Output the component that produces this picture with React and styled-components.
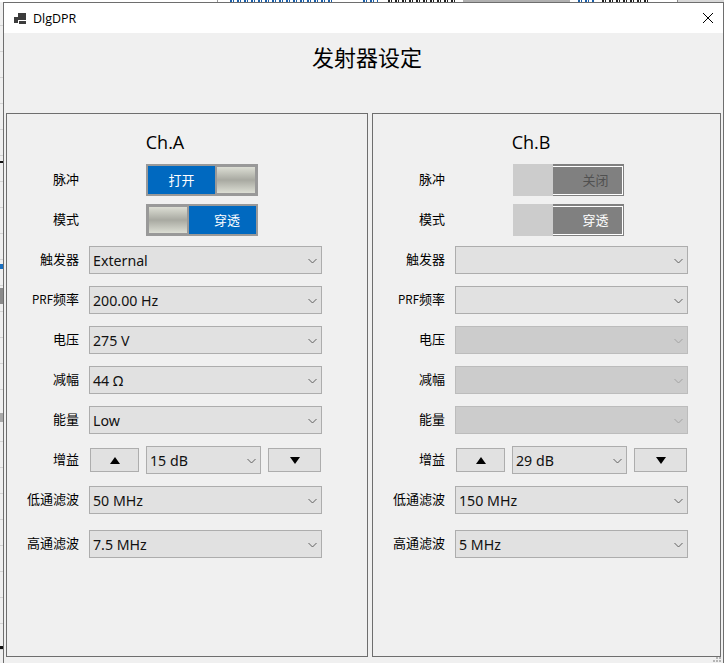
import React from "react";
import styled, { createGlobalStyle } from "styled-components";

const strip = (color, x, y, w, h) => `linear-gradient(${color},${color}) ${x}px ${y}px / ${w}px ${h}px no-repeat`;
const dashes = (color, x, w) =>
  `repeating-linear-gradient(90deg, ${color} 0 2px, transparent 2px 3px, ${color} 3px 4px, transparent 4px 7px) ${x}px 0 / ${w}px 2px no-repeat`;

const Global = createGlobalStyle`
  html, body { margin: 0; padding: 0; height: 663px; overflow: hidden; }
  body {
    font-family: "Noto Sans", "Noto Sans CJK SC", sans-serif;
    color: #000;
    background:
      ${strip("#111", 0, 161, 3, 2)},
      ${strip("#111", 0, 646, 3, 3)},
      ${strip("#1a6fc0", 0, 264, 3, 5)},
      ${strip("#a8a8a8", 0, 413, 3, 9)},
      ${strip("#8a8a8a", 0, 288, 3, 16)},
      ${dashes("#1a5ea8", 230, 105)},
      ${dashes("#1a5ea8", 363, 15)},
      ${dashes("#222", 388, 67)},
      ${dashes("#1a5ea8", 578, 17)},
      ${dashes("#222", 602, 48)},
      ${strip("#b0b0b0", 463, 0, 107, 2)},
      ${strip("#999", 217, 0, 1, 2)},
      ${strip("#888", 677, 0, 1, 2)},
      ${strip("#d8d8d8", 678, 0, 46, 2)},
      ${strip("#fff", 0, 0, 724, 2)},
      repeating-linear-gradient(to bottom, #f0f0f0 0 25px, #d4d4d4 25px 26px);
  }
  #root { padding: 2px 0 0 3px; }
`;

const Window = styled.div`
  position: relative;
  box-sizing: border-box;
  width: 721px;
  height: 661px;
  background: #f0f0f0;
  border: 1px solid #6e6e6e;
  border-bottom: 0;
`;

const TitleBar = styled.div`
  display: flex;
  align-items: center;
  height: 30px;
  padding: 0 10px 0 10px;
  background: #fff;
  font-size: 12.5px;
`;

const TitleText = styled.span`
  flex: 1;
  margin-left: 7px;
  font-family: "Open Sans", sans-serif;
`;

const Heading = styled.h1`
  margin: 0;
  height: 80px;
  box-sizing: border-box;
  padding: 8px 0 0 7px;
  text-align: center;
  font-size: 22px;
  font-weight: 400;
  line-height: 30px;
  font-family: "Noto Sans CJK SC", sans-serif;
`;

const Panels = styled.div`
  display: flex;
  gap: 4px;
  padding-left: 2px;
`;

const Panel = styled.section`
  box-sizing: border-box;
  width: ${(p) => p.$width}px;
  height: 544px;
  border: 1px solid #6e6e6e;
`;

const Column = styled.div`
  display: flex;
  flex-direction: column;
  width: 316px;
`;

const ChannelTitle = styled.h2`
  margin: 0 0 10px;
  padding: 16px 0 0 0;
  height: 24px;
  line-height: 24px;
  box-sizing: content-box;
  text-align: center;
  font-size: 18px;
  font-weight: 400;
  font-family: "Open Sans", sans-serif;
`;

const Row = styled.div`
  display: grid;
  grid-template-columns: 72px 1fr;
  column-gap: 10px;
  align-items: center;
  margin-bottom: ${(p) => p.$after}px;
`;

const Label = styled.span`
  text-align: right;
  font-size: 13px;
  line-height: 18px;
  padding-bottom: 3px;
  font-family: "Noto Sans CJK SC", sans-serif;
`;

const LabelLatin = styled.span`
  font-size: 11.5px;
`;

const ToggleSlot = styled.div`
  display: flex;
  margin-left: ${(p) => (p.$disabled ? 58 : 57)}px;
`;

const ToggleFrame = styled.div`
  display: flex;
  gap: 2px;
  box-sizing: border-box;
  width: 112px;
  height: 32px;
  border: 2px solid #999;
  background: #999;
`;

const ToggleFace = styled.div`
  flex: 1;
  display: flex;
  align-items: center;
  justify-content: center;
  padding-left: ${(p) => p.$shift || 0}px;
  padding-bottom: 2px;
  box-sizing: border-box;
  background: #0069c0;
  color: #fff;
  font-size: 13px;
  font-family: "Noto Sans CJK SC", sans-serif;
`;

const ToggleThumb = styled.div`
  width: 38px;
  margin: 1px 0;
  margin-${(p) => p.$side}: 1px;
  background: linear-gradient(to bottom, #dcded4 0%, #a8a9a1 50%, #dcded4 100%);
`;

const OffPart = styled.div`
  width: 40px;
  height: 32px;
  background: #ccc;
`;

const OnPart = styled.div`
  position: relative;
  display: flex;
  align-items: center;
  justify-content: center;
  box-sizing: border-box;
  width: 71px;
  height: 32px;
  padding: 0 0 2px 14px;
  background: #808080;
  color: ${(p) => p.$color};
  font-size: 13px;
  font-family: "Noto Sans CJK SC", sans-serif;
  &::after {
    content: "";
    position: absolute;
    inset: 2px 1px 1px 0;
    border: 1px solid #fff;
    border-left: 0;
  }
`;

const Select = styled.div`
  position: relative;
  display: flex;
  align-items: center;
  box-sizing: border-box;
  width: ${(p) => p.$width || 233}px;
  height: 28px;
  padding-left: 3px;
  border: 1px solid ${(p) => (p.$disabled ? "#bcbcbc" : "#adadad")};
  background: ${(p) => (p.$disabled ? "#cccccc" : "#e1e1e1")};
  font-size: 14.2px;
  color: #111;
`;

const Chevron = styled.svg`
  position: absolute;
  right: 4px;
  top: 11px;
  width: 9px;
  height: 6px;
  fill: none;
  stroke: ${(p) => (p.$disabled ? "#a2a2a2" : "#606060")};
  stroke-width: 1;
`;

const GainControls = styled.div`
  display: flex;
  align-items: center;
  gap: 7px;
  margin-left: 1px;
`;

const StepButton = styled.div`
  display: flex;
  align-items: center;
  justify-content: center;
  box-sizing: border-box;
  width: ${(p) => p.$width}px;
  height: 24px;
  border: 1px solid #adadad;
  background: #e1e1e1;
`;

const Triangle = styled.svg`
  width: 10px;
  height: 7px;
  fill: #000;
`;

const Grip = styled.svg`
  position: absolute;
  right: 2px;
  bottom: 1px;
  width: 8px;
  height: 5px;
  fill: #b5b5b5;
`;

const AppIcon = () => (
  <svg width="12" height="11" viewBox="0 0 12 11" fill="#3c3c3c">
    <rect x="0" y="4" width="4" height="6" />
    <rect x="4" y="0" width="8" height="7" />
    <rect x="5" y="8" width="7" height="3" />
  </svg>
);

const CloseIcon = () => (
  <svg width="10" height="10" viewBox="0 0 10 10" stroke="#000" strokeWidth="1" fill="none">
    <path d="M0 0L10 10M10 0L0 10" />
  </svg>
);

const Drop = ({ children, disabled, width }) => (
  <Select $disabled={disabled} $width={width}>
    {children}
    <Chevron $disabled={disabled} viewBox="0 0 9 6">
      <path d="M0.5 1L4.5 5L8.5 1" />
    </Chevron>
  </Select>
);

const Toggle = ({ text, thumb }) => (
  <ToggleFrame>
    {thumb === "left" && <ToggleThumb $side="left" />}
    <ToggleFace $shift={thumb === "left" ? 9 : 0}>{text}</ToggleFace>
    {thumb === "right" && <ToggleThumb $side="right" />}
  </ToggleFrame>
);

const DisabledToggle = ({ text, color }) => (
  <>
    <OffPart />
    <OnPart $color={color}>{text}</OnPart>
  </>
);

const Channel = ({ name, width, pulse, mode, values, gain, low, high, off }) => (
  <Panel $width={width}>
    <Column>
      <ChannelTitle>{name}</ChannelTitle>
      <Row $after={8}>
        <Label>脉冲</Label>
        <ToggleSlot $disabled={off}>
          {off ? <DisabledToggle text={pulse} color="#505050" /> : <Toggle text={pulse} thumb="right" />}
        </ToggleSlot>
      </Row>
      <Row $after={10}>
        <Label>模式</Label>
        <ToggleSlot $disabled={off}>
          {off ? <DisabledToggle text={mode} color="#fff" /> : <Toggle text={mode} thumb="left" />}
        </ToggleSlot>
      </Row>
      <Row $after={12}>
        <Label>触发器</Label>
        <Drop>{values[0]}</Drop>
      </Row>
      <Row $after={12}>
        <Label>
          <LabelLatin>PRF</LabelLatin>频率
        </Label>
        <Drop>{values[1]}</Drop>
      </Row>
      <Row $after={12}>
        <Label>电压</Label>
        <Drop disabled={off}>{values[2]}</Drop>
      </Row>
      <Row $after={12}>
        <Label>减幅</Label>
        <Drop disabled={off}>{values[3]}</Drop>
      </Row>
      <Row $after={12}>
        <Label>能量</Label>
        <Drop disabled={off}>{values[4]}</Drop>
      </Row>
      <Row $after={12}>
        <Label>增益</Label>
        <GainControls>
          <StepButton $width={49}>
            <Triangle viewBox="0 0 10 7">
              <polygon points="5,0 10,7 0,7" />
            </Triangle>
          </StepButton>
          <Drop width={115}>{gain}</Drop>
          <StepButton $width={53}>
            <Triangle viewBox="0 0 10 7">
              <polygon points="0,0 10,0 5,7" />
            </Triangle>
          </StepButton>
        </GainControls>
      </Row>
      <Row $after={16}>
        <Label>低通滤波</Label>
        <Drop>{low}</Drop>
      </Row>
      <Row $after={0}>
        <Label>高通滤波</Label>
        <Drop>{high}</Drop>
      </Row>
    </Column>
  </Panel>
);

export default function App() {
  return (
    <>
      <Global />
      <Window>
        <TitleBar>
          <AppIcon />
          <TitleText>DlgDPR</TitleText>
          <CloseIcon />
        </TitleBar>
        <Heading>发射器设定</Heading>
        <Panels>
          <Channel
            name="Ch.A"
            width={362}
            pulse="打开"
            mode="穿透"
            values={["External", "200.00 Hz", "275 V", "44 Ω", "Low"]}
            gain="15 dB"
            low="50 MHz"
            high="7.5 MHz"
          />
          <Channel
            name="Ch.B"
            width={349}
            off
            pulse="关闭"
            mode="穿透"
            values={["", "", "", "", ""]}
            gain="29 dB"
            low="150 MHz"
            high="5 MHz"
          />
        </Panels>
        <Grip viewBox="0 0 8 5">
          <rect x="0" y="3" width="2" height="2" />
          <rect x="3" y="3" width="2" height="2" />
          <rect x="6" y="3" width="2" height="2" />
          <rect x="3" y="0" width="2" height="2" />
          <rect x="6" y="0" width="2" height="2" />
        </Grip>
      </Window>
    </>
  );
}
